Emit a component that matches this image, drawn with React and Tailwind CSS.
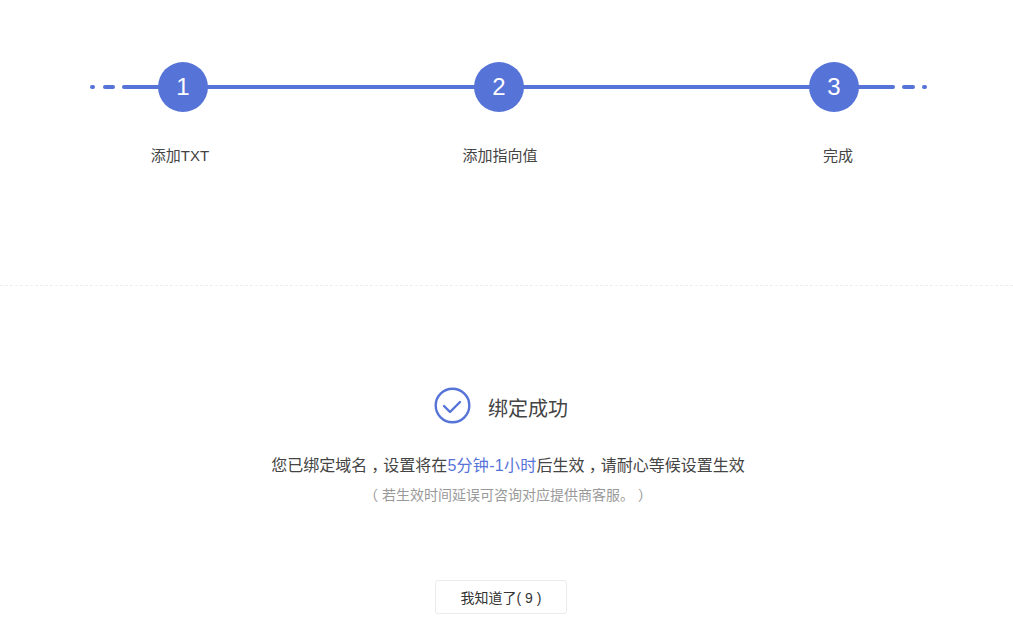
const FONT = "font-['Liberation_Sans','Noto_Sans_CJK_SC',sans-serif]";

function Seg({ className }) {
  return <div className={`h-1 bg-[#5673d8] rounded-full ${className}`} />;
}

function Circle({ n }) {
  return (
    <div className="w-[50px] h-[50px] rounded-full bg-[#5673d8] text-white flex items-center justify-center text-[24px] shrink-0">
      {n}
    </div>
  );
}

function Comma() {
  return <span className="ml-[4px] tracking-[-4px]">，</span>;
}

export default function App() {
  return (
    <div className={`w-[1013px] h-[640px] bg-white overflow-hidden ${FONT} text-[#333]`}>
      <div className="pt-[62px] h-[286px] border-b border-dashed border-[#eeeeee]">
        <div className="flex items-center h-[50px] pl-[90px]">
          <Seg className="w-[5px]" />
          <Seg className="w-[12px] ml-[8px]" />
          <Seg className="w-[40px] ml-[7px] -mr-[4px]" />
          <Circle n="1" />
          <Seg className="w-[270px] -mx-[2px]" />
          <Circle n="2" />
          <Seg className="w-[289px] -mx-[2px]" />
          <Circle n="3" />
          <Seg className="w-[40px] -ml-[4px]" />
          <Seg className="w-[13px] ml-[7px]" />
          <Seg className="w-[5px] ml-[7px]" />
        </div>
        <div className="flex mt-[33px] pl-[130px] text-[15px] leading-[22px] text-[#444]">
          <div className="w-[100px] text-center">添加TXT</div>
          <div className="w-[100px] ml-[220px] text-center">添加指向值</div>
          <div className="w-[100px] ml-[238px] text-center">完成</div>
        </div>
      </div>
      <div className="flex flex-col items-center pt-[100px]">
        <div className="flex items-center h-[38px] mr-[11px]">
          <svg width="38" height="38" viewBox="0 0 38 38" fill="none" className="mr-[16px]">
            <circle cx="18.5" cy="19.5" r="16.8" stroke="#5673d8" strokeWidth="2.4" />
            <path d="M10 20 L16 26 L26 16" stroke="#5673d8" strokeWidth="2.4" strokeLinecap="round" strokeLinejoin="round" />
          </svg>
          <div className="text-[20px] leading-[28px] text-[#444] relative top-[4px]">绑定成功</div>
        </div>
        <div className="mt-[30px] ml-[3px] text-[16px] leading-[24px] text-[#444]">
          您已绑定域名<Comma />设置将在<span className="text-[#5673d8] tracking-[0.3px]">5分钟-1小时</span>后生效<Comma />请耐心等候设置生效
        </div>
        <div className="mt-[7px] ml-[3px] text-[14px] leading-[20px] text-[#999]">（ 若生效时间延误可咨询对应提供商客服。 ）</div>
        <button className="mt-[75px] mr-[11px] w-[132px] h-[34px] pt-[2px] bg-white border border-[#e9ecef] rounded-[3px] text-[14px] text-[#333]">
          我知道了( 9 )
        </button>
      </div>
    </div>
  );
}
